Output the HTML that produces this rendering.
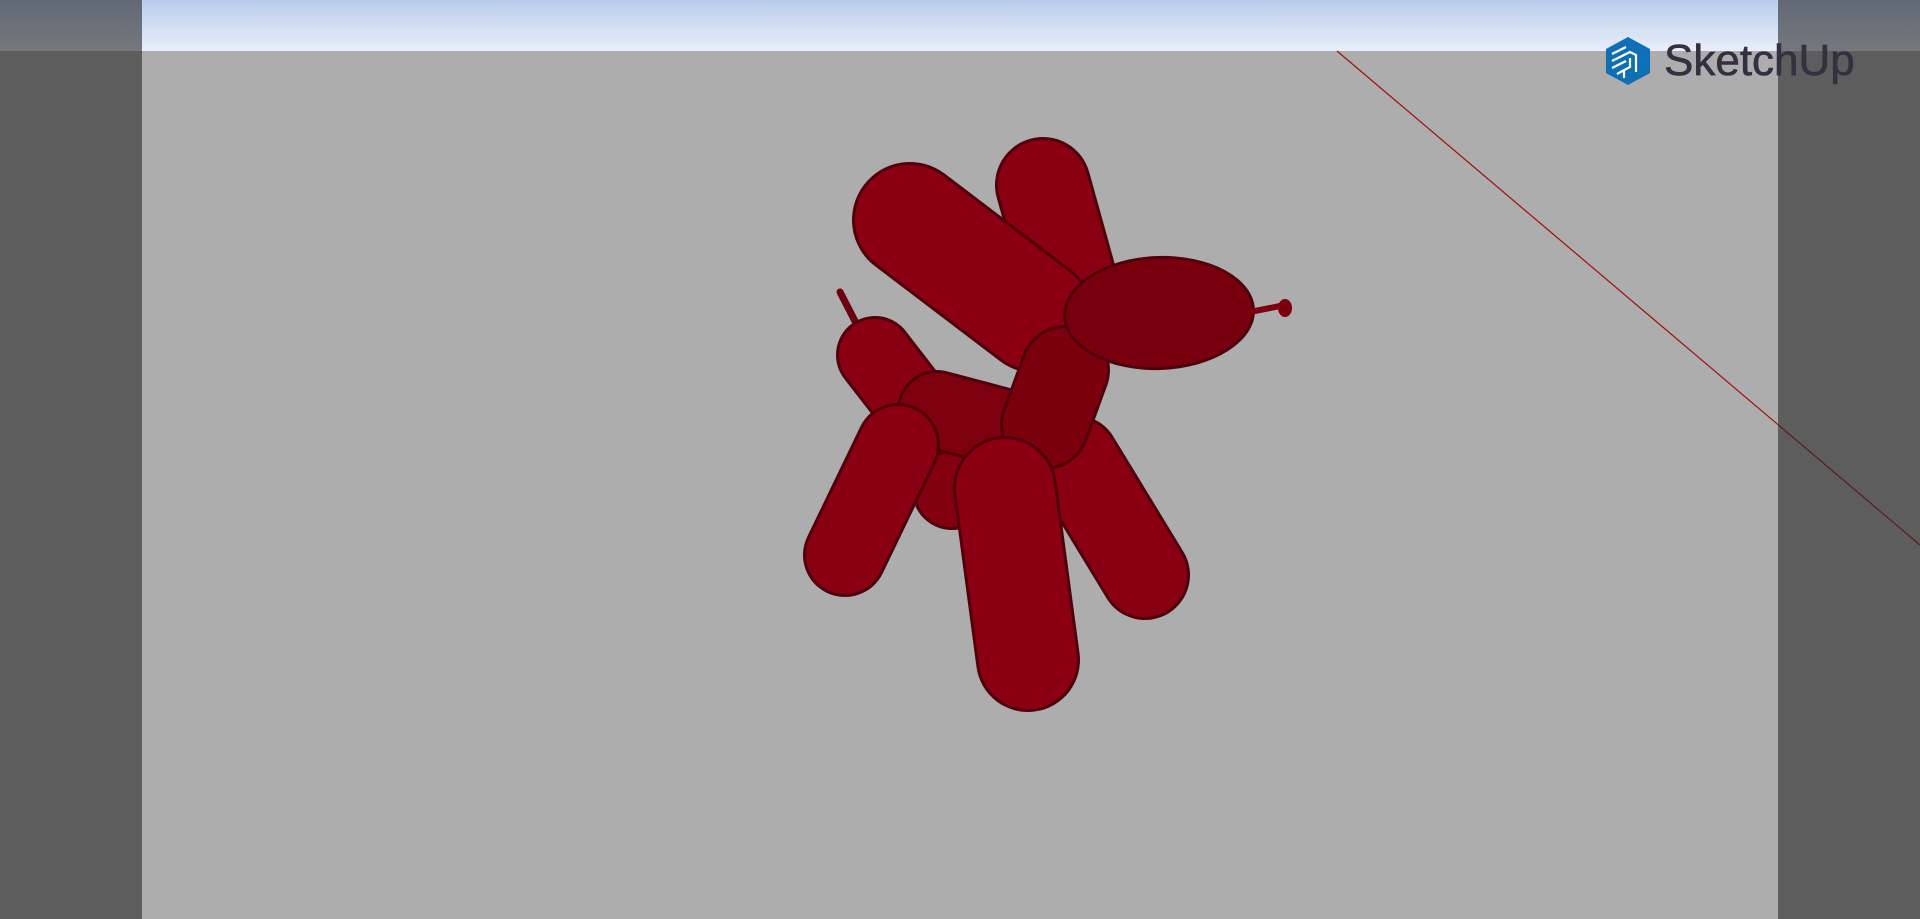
<!DOCTYPE html>
<html><head><style>
html,body{margin:0;padding:0;width:1920px;height:919px;overflow:hidden;background:#adadad;font-family:"Liberation Sans",sans-serif}
.sky{position:absolute;left:0;top:0;width:1920px;height:51px;background:linear-gradient(#b8cdec,#e8eefa)}
.band{position:absolute;top:0;height:919px;background:rgba(40,40,40,0.6)}
</style></head><body>
<div class="sky"></div>
<svg width="1920" height="919" style="position:absolute;left:0;top:0">
<line x1="1337" y1="51" x2="1920" y2="545" stroke="#a01010" stroke-width="1.2"/>
<g stroke-linecap="round">
<line x1="840" y1="292" x2="857" y2="325" stroke="#6a0010" stroke-width="7"/>
<line x1="875" y1="355" x2="906" y2="395" stroke="#50000a" stroke-width="78"/><line x1="875" y1="355" x2="906" y2="395" stroke="#880012" stroke-width="72"/>
<circle cx="952" cy="490" r="40" fill="#50000a"/><circle cx="952" cy="490" r="37" fill="#82000f"/>
<line x1="937" y1="410" x2="1020" y2="432" stroke="#50000a" stroke-width="80"/><line x1="937" y1="410" x2="1020" y2="432" stroke="#7d000e" stroke-width="74"/>
<line x1="1075" y1="460" x2="1145" y2="575" stroke="#50000a" stroke-width="90"/><line x1="1075" y1="460" x2="1145" y2="575" stroke="#880012" stroke-width="84"/>
<line x1="1043" y1="185" x2="1075" y2="300" stroke="#50000a" stroke-width="96"/><line x1="1043" y1="185" x2="1075" y2="300" stroke="#880012" stroke-width="90"/>
<line x1="910" y1="220" x2="1035" y2="315" stroke="#50000a" stroke-width="116"/><line x1="910" y1="220" x2="1035" y2="315" stroke="#8a0012" stroke-width="110"/>
<line x1="1065" y1="370" x2="1045" y2="425" stroke="#50000a" stroke-width="90"/><line x1="1065" y1="370" x2="1045" y2="425" stroke="#7a000e" stroke-width="84"/>
<ellipse cx="1159" cy="313" rx="96" ry="57" fill="#50000a" transform="rotate(-2 1159 313)"/>
<ellipse cx="1159" cy="313" rx="93" ry="54" fill="#78000e" transform="rotate(-2 1159 313)"/>
<line x1="1250" y1="312" x2="1280" y2="306" stroke="#7a000e" stroke-width="6"/>
<ellipse cx="1285" cy="308" rx="7" ry="9" fill="#7a000e"/>
<line x1="898" y1="445" x2="845" y2="555" stroke="#50000a" stroke-width="84"/><line x1="898" y1="445" x2="845" y2="555" stroke="#880012" stroke-width="78"/>
<line x1="1005" y1="488" x2="1028" y2="660" stroke="#50000a" stroke-width="104"/><line x1="1005" y1="488" x2="1028" y2="660" stroke="#8a0012" stroke-width="98"/>
</g>
</svg>
<div class="band" style="left:0;width:142px"></div>
<div class="band" style="left:1778px;width:142px"></div>
<svg width="48" height="50" viewBox="0 0 48 50" style="position:absolute;left:1604px;top:36px">
<path d="M24 1 L46 13 L46 37 L24 49 L2 37 L2 13 Z" fill="#0e6fb5"/>
<path d="M8 18 L22 11 M8 25 L26 16 L32 19 L32 36 M8 32 L22 25 M13 38 L26 31 L26 22 M20 42 L20 34" stroke="#fff" stroke-width="2.2" fill="none"/>
</svg>
<div style="position:absolute;left:1664px;top:36px;font-size:44px;color:#33303f;-webkit-text-stroke:0.6px #33303f">SketchUp</div>
</body></html>
